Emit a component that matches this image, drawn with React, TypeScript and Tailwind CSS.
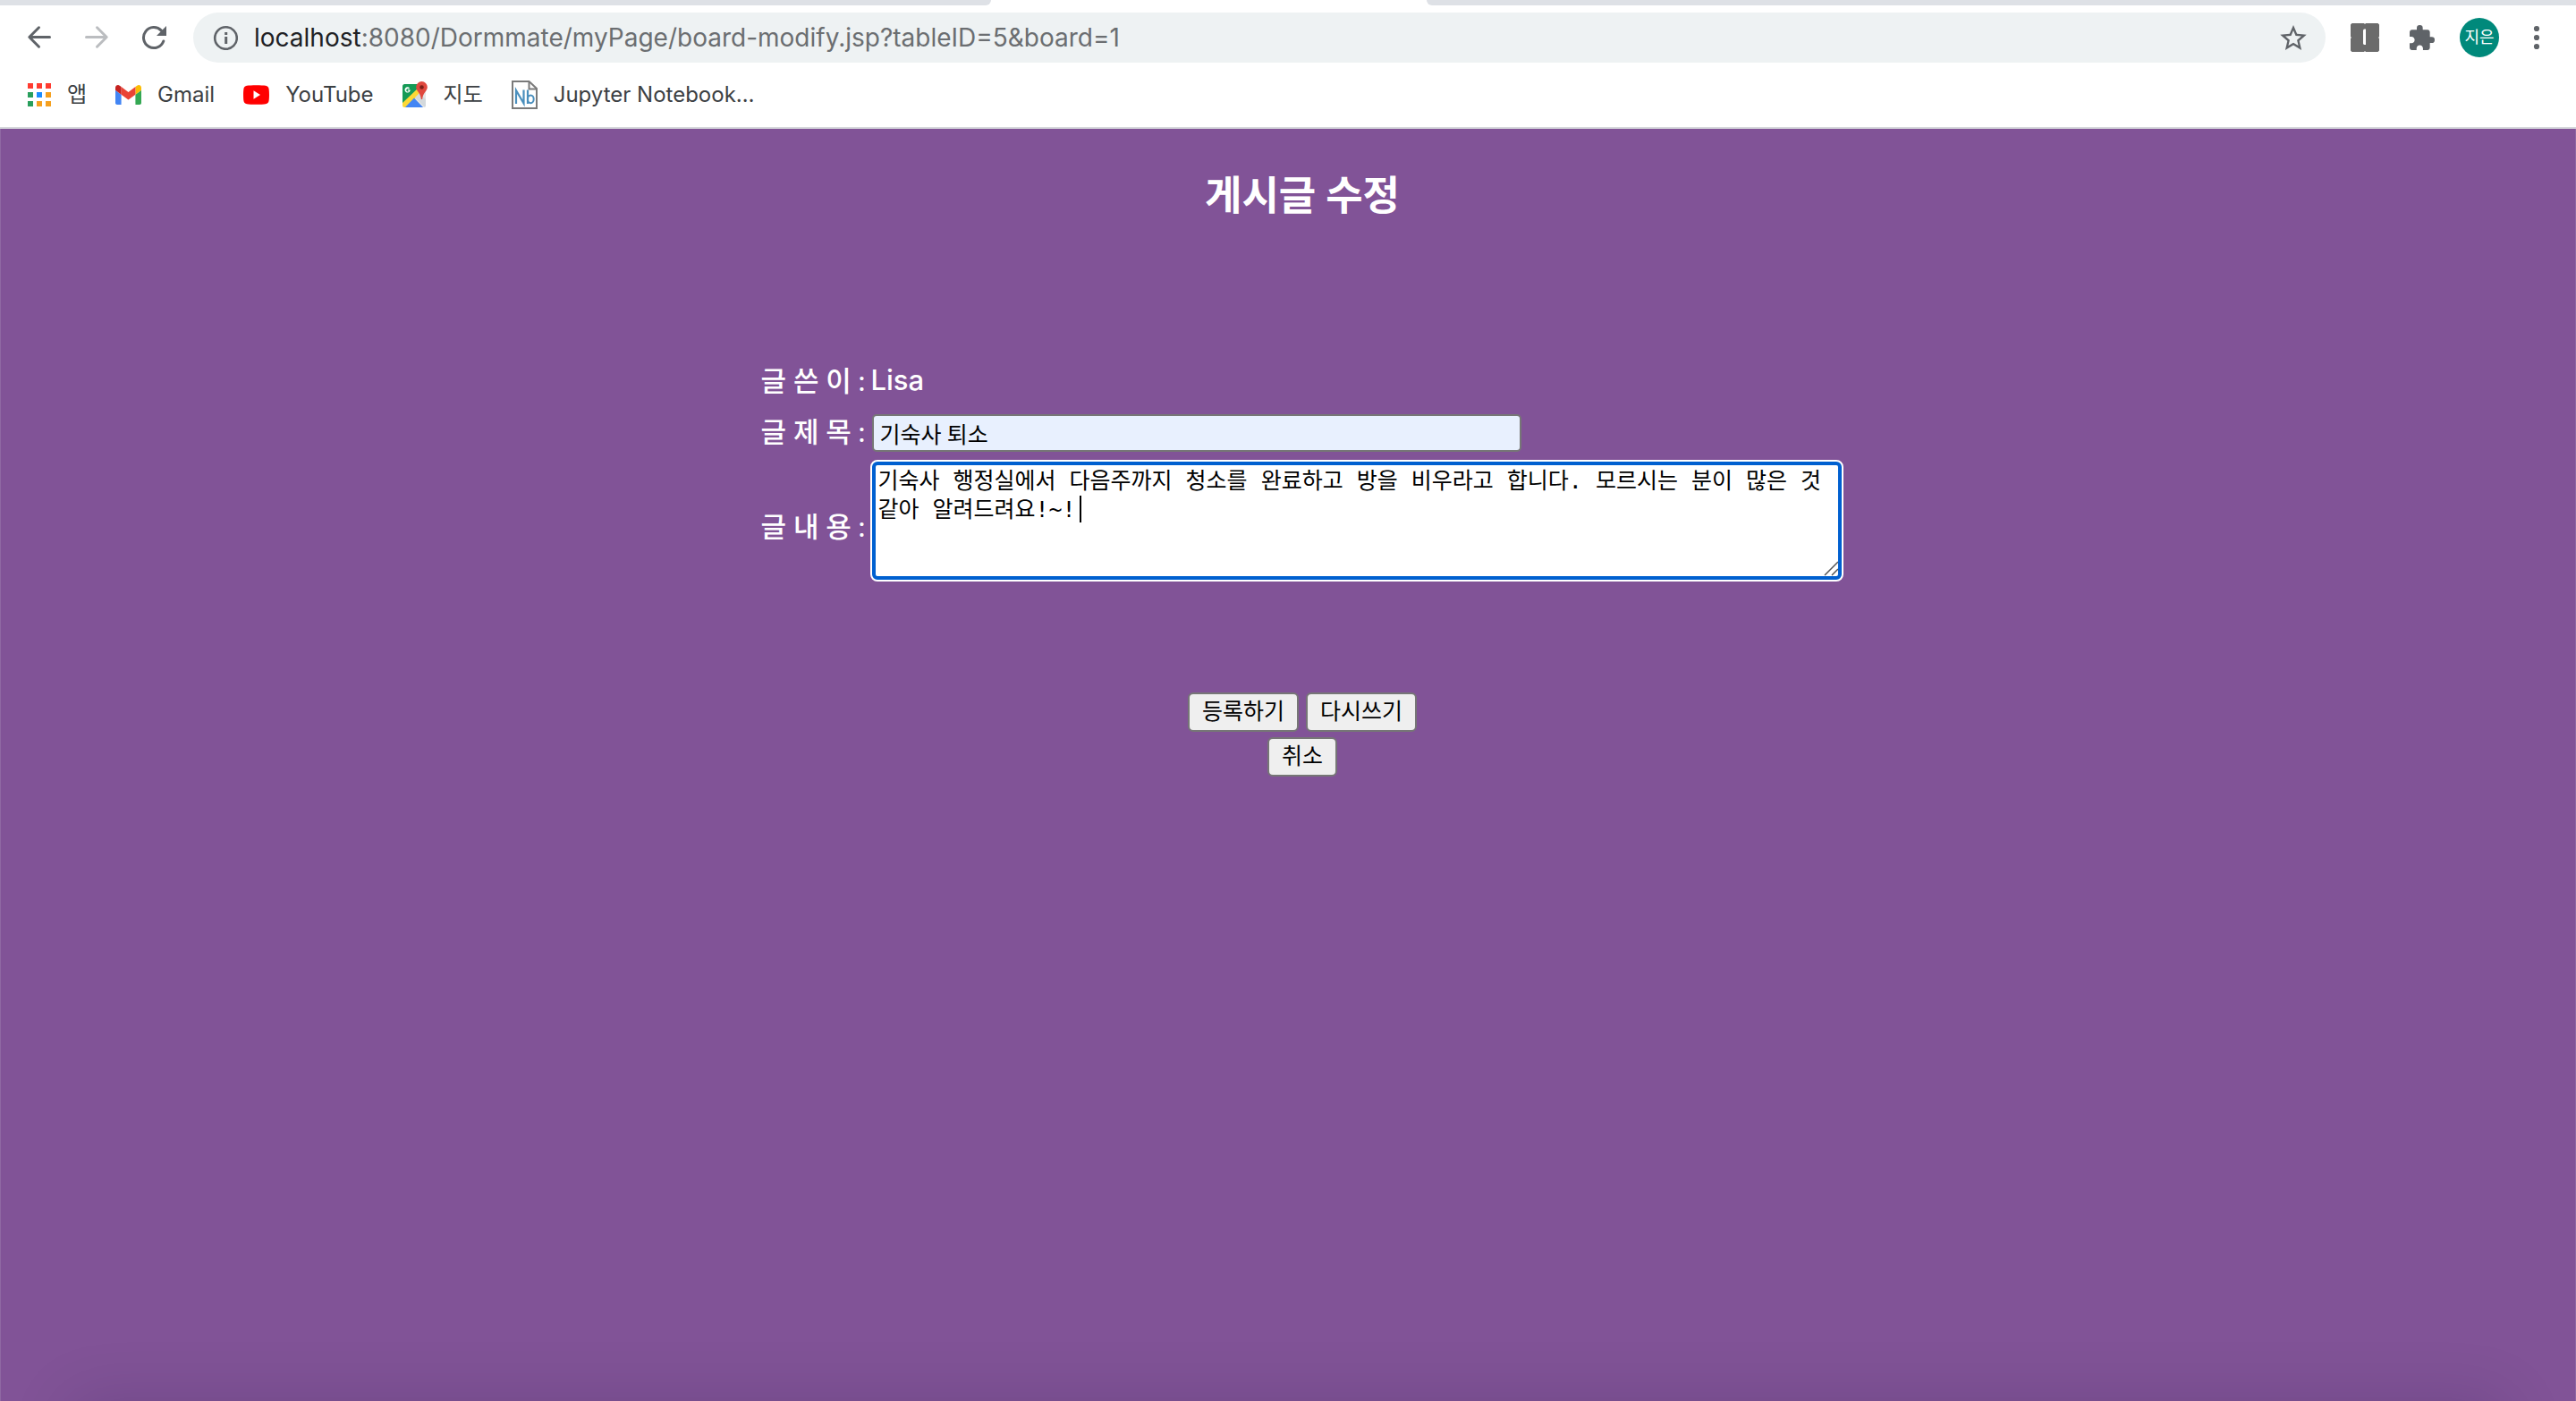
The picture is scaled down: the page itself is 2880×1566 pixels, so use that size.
import React from "react";

function BackIcon() {
  return (
    <svg viewBox="0 0 28 28" className="size-7" fill="none" stroke="currentColor" strokeWidth="3" strokeLinecap="round" strokeLinejoin="round" aria-hidden="true">
      <path d="M25.5 13.5H3M13.5 2.8 2.8 13.5l10.7 10.7" />
    </svg>
  );
}

function ForwardIcon() {
  return (
    <svg viewBox="0 0 28 28" className="size-7" fill="none" stroke="currentColor" strokeWidth="3" strokeLinecap="round" strokeLinejoin="round" aria-hidden="true">
      <path d="M2.5 13.5H25M14.5 2.8l10.7 10.7-10.7 10.7" />
    </svg>
  );
}

function ReloadIcon() {
  return (
    <svg viewBox="0 0 28 28" className="size-7" aria-hidden="true">
      <path d="M24.8 18A11.5 11.5 0 1 1 22.3 6.1" fill="none" stroke="currentColor" strokeWidth="3" strokeLinecap="round" />
      <path d="M28 1v11H17z" fill="currentColor" />
    </svg>
  );
}

function InfoIcon() {
  return (
    <svg viewBox="0 0 28 28" className="size-7" aria-hidden="true">
      <circle cx="14.5" cy="14.5" r="12.3" fill="none" stroke="currentColor" strokeWidth="2.6" />
      <path d="M13.2 8h3v3h-3zM13.2 13h3v8h-3z" fill="currentColor" />
    </svg>
  );
}

function StarIcon() {
  return (
    <svg viewBox="2 2 20 19" className="h-7 w-[30px]" fill="currentColor" aria-hidden="true">
      <path d="M22 9.24l-7.19-.62L12 2 9.19 8.63 2 9.24l5.46 4.73L5.82 21 12 17.27 18.18 21l-1.63-7.03L22 9.24zM12 15.4l-3.76 2.27 1-4.28-3.32-2.88 4.38-.38L12 6.1l1.71 4.04 4.38.38-3.32 2.88 1 4.28L12 15.4z" />
    </svg>
  );
}

function BlockIcon() {
  return (
    <svg viewBox="0 0 32 32" className="size-8" aria-hidden="true">
      <path d="M1.5 0H15l1 1 1-1h13.500L32 1.500V15l-1 1 1 1v13.500L30.500 32H17l-1-1-1 1H1.500L0 30.500V17l1-1-1-1V1.500z" fill="#6b6b6b" />
      <path d="M14 7.500 15 6.500h2V24h-2l-1-1z" fill="#fff" />
    </svg>
  );
}

function PuzzleIcon() {
  return (
    <svg viewBox="2 1 21 21" className="size-7" fill="currentColor" aria-hidden="true">
      <path d="M20.5 11H19V7c0-1.100-.9-2-2-2h-4V3.500a2.500 2.500 0 0 0-5 0V5H4c-1.100 0-1.990.9-1.990 2v3.800H3.500c1.490 0 2.700 1.210 2.700 2.700s-1.210 2.700-2.700 2.700H2V20c0 1.100.9 2 2 2h3.800v-1.500c0-1.490 1.210-2.700 2.700-2.700s2.700 1.210 2.700 2.700V22H17c1.100 0 2-.9 2-2v-4h1.500a2.500 2.500 0 0 0 0-5z" />
    </svg>
  );
}

function DotsIcon() {
  return (
    <svg viewBox="0 0 28 28" className="size-7" fill="currentColor" aria-hidden="true">
      <circle cx="14" cy="4" r="3.1" />
      <circle cx="14" cy="14" r="3.1" />
      <circle cx="14" cy="24" r="3.1" />
    </svg>
  );
}

function AppsIcon() {
  const cells = ["#ff3b30", "#ff3b30", "#ff3b30", "#289f5c", "#1a8cff", "#f5a01e", "#289f5c", "#f5a01e", "#f5a01e"];
  return (
    <svg viewBox="0 0 26 26" className="size-[26px]" aria-hidden="true">
      {cells.map((fill, i) => (
        <rect key={i} x={(i % 3) * 10} y={Math.floor(i / 3) * 10} width="6" height="6" fill={fill} />
      ))}
    </svg>
  );
}

function GmailIcon() {
  return (
    <svg viewBox="52 42 88 66" className="h-[22px] w-[29px]" aria-hidden="true">
      <path fill="#4285f4" d="M58 108h14V74L52 59v43c0 3.320 2.690 6 6 6" />
      <path fill="#34a853" d="M120 108h14c3.320 0 6-2.690 6-6V59l-20 15" />
      <path fill="#fbbc04" d="M120 48v26l20-15v-8c0-7.420-8.470-11.650-14.400-7.200" />
      <path fill="#ea4335" d="M72 74V48l24 18 24-18v26L96 92" />
      <path fill="#c5221f" d="M52 51v8l20 15V48l-5.600-4.200c-5.940-4.450-14.400-.22-14.400 7.200" />
    </svg>
  );
}

function YouTubeIcon() {
  return (
    <svg viewBox="0 0 29 22" className="h-[22px] w-[29px]" aria-hidden="true">
      <path d="M4 .8C8 0 21 0 25 .8c2.200.4 3.300 1.500 3.600 3.600.5 3.500.5 9.700 0 13.200-.3 2.100-1.400 3.200-3.600 3.600-4 .8-17 .8-21 0C1.800 20.800.7 19.700.4 17.600c-.5-3.500-.5-9.700 0-13.200C.7 2.300 1.800 1.200 4 .8z" fill="#f00" />
      <path d="M11.500 6.300v9.400l7.500-4.700z" fill="#fff" />
    </svg>
  );
}

function MapsIcon() {
  return (
    <svg viewBox="0 0 28 30" className="h-[30px] w-7" aria-hidden="true">
      <defs>
        <clipPath id="maps-tile">
          <rect x="0" y="3" width="26" height="26" rx="2.500" />
        </clipPath>
      </defs>
      <g clipPath="url(#maps-tile)">
        <rect y="3" width="26" height="26" fill="#e6e6e6" />
        <path d="M0 3h22L0 26z" fill="#159a56" />
        <path d="M0 24 17 8l4 4L4 29H0z" fill="#fdd835" />
        <path d="M2 30 13 18.500 24 30z" fill="#4285f4" />
        <path d="m14 18 12 12V20l-7-7z" fill="#d4d9dc" />
      </g>
      <path d="M8.500 9.300H5.900v1.300h1.300c-.2.600-.7.900-1.300.9a1.700 1.700 0 1 1 1.100-3l1-1a3.100 3.100 0 1 0 .6 2.700z" fill="#fff" />
      <path d="M21.500 0a6.300 6.300 0 0 0-6.300 6.400c0 4.300 4.900 6 5.700 13.600h1.200c.8-7.600 5.700-9.300 5.700-13.600A6.300 6.300 0 0 0 21.500 0z" fill="#e0483e" />
      <circle cx="21.500" cy="6.500" r="2.300" fill="#7d1f18" />
    </svg>
  );
}

function NotebookIcon() {
  return (
    <svg viewBox="0 0 29 32" className="h-8 w-[29px]" fill="none" aria-hidden="true">
      <path d="M1 1h18.500L28 9V31H1z" fill="#fff" stroke="#7a7a7a" strokeWidth="2" />
      <path d="M19.500 1v8.500H28" stroke="#7a7a7a" strokeWidth="2" />
      <path d="M5 26V11l8.500 14.500V10.500" stroke="#4a8fbd" strokeWidth="2.200" />
      <path d="M18 10.500V26" stroke="#4a8fbd" strokeWidth="2.200" />
      <ellipse cx="21.300" cy="20.800" rx="3.400" ry="4.400" stroke="#4a8fbd" strokeWidth="2" />
    </svg>
  );
}

const bookmarks = [
  { label: "앱", icon: <AppsIcon /> },
  { label: "Gmail", icon: <GmailIcon /> },
  { label: "YouTube", icon: <YouTubeIcon /> },
  { label: "지도", icon: <MapsIcon /> },
  { label: "Jupyter Notebook…", icon: <NotebookIcon /> },
];

function BrowserBar() {
  return (
    <header className="border-b-2 border-[#d5d7db] bg-white font-['Inter','Noto_Sans_CJK_KR',sans-serif]">
      <div className="flex h-1.5 bg-white">
        <div className="w-[1108px] rounded-br-md bg-[#dee1e6]" />
        <div className="w-[487px]" />
        <div className="flex-1 rounded-bl-md bg-[#dee1e6]" />
      </div>
      <div className="flex items-center gap-7 px-[30px] pt-2 text-[#5f6368]">
        <nav className="flex items-center gap-9 pr-0.5" aria-label="탐색">
          <button type="button" aria-label="뒤로"><BackIcon /></button>
          <button type="button" aria-label="앞으로" className="text-[#bbbdc0]"><ForwardIcon /></button>
          <button type="button" aria-label="새로고침"><ReloadIcon /></button>
        </nav>
        <div className="flex h-14 flex-1 items-center gap-[18px] rounded-full bg-[#eef2f3] pr-[21px] pl-[22px]">
          <InfoIcon />
          <p className="flex-1 text-[28px] leading-8 text-[#6b6e71]">
            <span className="text-[#202124]">localhost</span>:8080/Dormmate/myPage/board-modify.jsp?tableID=5&amp;board=1
          </p>
          <button type="button" aria-label="북마크에 추가"><StarIcon /></button>
        </div>
        <button type="button" aria-label="확장 프로그램 I"><BlockIcon /></button>
        <button type="button" aria-label="확장 프로그램" className="flex w-[34px] justify-end"><PuzzleIcon /></button>
        <button type="button" className="flex size-11 items-center justify-center rounded-full bg-[#00897b] text-[18px] leading-none text-white">지은</button>
        <button type="button" aria-label="메뉴"><DotsIcon /></button>
      </div>
      <nav className="flex h-[72px] items-center gap-8 pl-[31px]" aria-label="북마크">
        {bookmarks.map((b) => (
          <a key={b.label} href="#" className="flex items-center gap-[18px] text-[24px] leading-8 text-[#3c4043]">
            {b.icon}
            <span>{b.label}</span>
          </a>
        ))}
      </nav>
    </header>
  );
}

function BoardForm() {
  return (
    <form className="mt-37 flex flex-col items-center" onSubmit={(e) => e.preventDefault()}>
      <div className="grid grid-cols-[auto_auto] items-center text-[31px] leading-[50px] font-medium">
        <span>글 쓴 이 :</span>
        <span className="font-['Inter']">Lisa</span>
        <label htmlFor="title" className="pr-1.5">글 제 목 :</label>
        <div className="ml-0.5 flex h-16 items-center pt-1">
          <input
            id="title"
            type="text"
            defaultValue="기숙사 퇴소"
            className="h-[42px] w-[726px] rounded-[5px] border-2 border-[#767676] bg-[#e8f0fe] px-1.5 text-[25px] leading-8 font-normal text-black outline-none"
          />
        </div>
        <label htmlFor="content" className="pt-3 pr-1.5">글 내 용 :</label>
        <div className="relative rounded-lg border-2 border-white bg-[#0060d0] p-1">
          <textarea
            id="content"
            defaultValue="기숙사 행정실에서 다음주까지 청소를 완료하고 방을 비우라고 합니다. 모르시는 분이 많은 것 같아 알려드려요!~!"
            className="block h-[124px] w-[1076px] resize-none rounded-xs bg-white px-0.5 pt-0.5 font-['DejaVu_Sans_Mono','Noto_Sans_CJK_KR',monospace] text-[25px] leading-8 font-normal text-black outline-none"
          />
          <span className="absolute top-[38px] left-[232px] h-[30px] w-0.5 bg-black" />
          <svg viewBox="0 0 16 22" className="absolute right-1 bottom-1 h-[22px] w-4" fill="none" stroke="#555" strokeWidth="1.5" aria-hidden="true">
            <path d="M1 21 16 6M9 21l7-7" />
          </svg>
        </div>
      </div>
      <div className="mt-31 flex flex-col items-center gap-1.5">
        <div className="flex gap-2">
          <FormButton type="submit">등록하기</FormButton>
          <FormButton type="reset">다시쓰기</FormButton>
        </div>
        <FormButton type="button">취소</FormButton>
      </div>
    </form>
  );
}

function FormButton({ type, children }: { type: "submit" | "reset" | "button"; children: React.ReactNode }) {
  return (
    <button type={type} className="flex h-11 items-center rounded-md border-2 border-[#767676] bg-[#efefef] px-3.5 pb-1 text-[25px] leading-8 text-black">
      {children}
    </button>
  );
}

export default function App() {
  return (
    <div className="flex min-h-screen flex-col">
      <BrowserBar />
      <main className="relative flex-1 overflow-hidden border-x border-[#8f68a3] bg-[#815397] pt-10 pl-8 font-['Lato','Noto_Sans_CJK_KR',sans-serif] text-white">
        <h1 className="text-center text-[45px] leading-[68px] font-bold">게시글 수정</h1>
        <BoardForm />
        <div className="pointer-events-none absolute inset-x-20 -bottom-40 h-40 shadow-[0_0_72px_0_rgba(0,0,40,0.14)]" />
      </main>
    </div>
  );
}
